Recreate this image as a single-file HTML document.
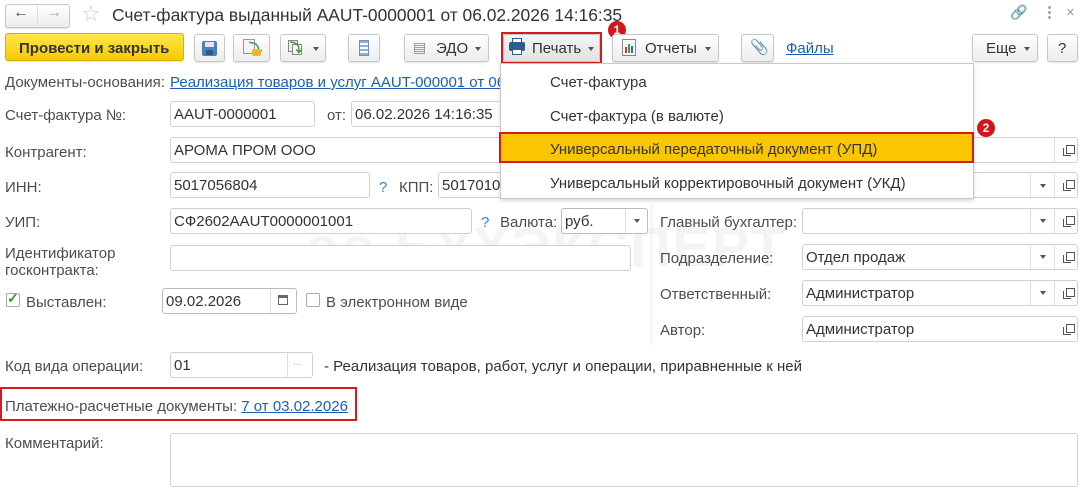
<!DOCTYPE html>
<html><head><meta charset="utf-8">
<style>
*{box-sizing:border-box;margin:0;padding:0}
body{width:1083px;height:492px;background:#fff;position:relative;overflow:hidden;font-family:"Liberation Sans",Arial,sans-serif;font-size:15px;color:#333}
.a{position:absolute;white-space:nowrap}
.btn{position:absolute;height:28px;border:1px solid #c8c8c8;border-radius:3px;background:linear-gradient(#fff,#ececec);box-shadow:0 1px 1px rgba(0,0,0,.12)}
.inp{position:absolute;height:26px;border:1px solid #d0d0d0;border-radius:3px;background:#fff;padding:4px 3px 2px;font-size:15px;color:#333;white-space:nowrap;overflow:hidden}
.lbl{position:absolute;color:#4d4d4d;white-space:nowrap;padding-top:1px}
.m{position:absolute;white-space:nowrap;color:#333;padding-top:1px}
.lnk{color:#1a5fb4;text-decoration:underline}
.dd{position:absolute;width:1px;background:#ddd}
.tri{position:absolute;width:0;height:0;border-left:3px solid transparent;border-right:3px solid transparent;border-top:4px solid #555}
.cp{position:absolute;width:9px;height:9px;border:1.3px solid #555;background:#fff}
.cp:before{content:"";position:absolute;left:-4px;top:2px;width:7px;height:7px;border-left:1.3px solid #555;border-bottom:1.3px solid #555}
.q{position:absolute;color:#2a85d6;padding-top:1px}
.badge{position:absolute;width:18px;height:18px;border-radius:50%;background:#d0181c;color:#fff;font-weight:bold;font-size:12px;text-align:center;line-height:18px}
</style></head><body>

<!-- title bar -->
<div class="btn" style="left:5px;top:4px;width:65px;height:24px"></div>
<div class="a" style="left:37px;top:6px;width:1px;height:20px;background:#ddd"></div>
<div class="a" style="left:13px;top:4px;font-size:16px;color:#444">&#8592;</div>
<div class="a" style="left:46px;top:4px;font-size:16px;color:#aaa">&#8594;</div>
<div class="a" style="left:81px;top:1px;font-size:22px;color:#ccc">&#9734;</div>
<div class="a" style="left:112px;top:5px;font-size:17.4px;color:#333">Счет-фактура выданный AAUT-0000001 от 06.02.2026 14:16:35</div>
<div class="a" style="left:1010px;top:4px;font-size:14px;color:#bbb">&#128279;</div>
<div class="a" style="left:1042px;top:3px;font-size:15px;color:#888;font-weight:bold">&#8942;</div>
<div class="a" style="left:1066px;top:4px;font-size:15px;color:#999">×</div>

<!-- toolbar -->
<div class="btn" style="left:5px;top:33px;width:179px;background:linear-gradient(#ffe54a,#f5cc00);border-color:#d6b200"></div>
<div class="a" style="left:19px;top:40px;font-weight:bold;color:#333">Провести и закрыть</div>
<div class="btn" style="left:194px;top:34px;width:31px"></div>
<div class="a" style="left:202px;top:41px;width:15px;height:15px;background:#4f7fb8;border-radius:2px"><div style="position:absolute;left:3px;top:1px;width:9px;height:5px;background:#dfe8f3"></div><div style="position:absolute;left:4px;top:9px;width:7px;height:5px;background:#2e5a8f"></div></div>
<div class="btn" style="left:233px;top:34px;width:37px"></div>
<div class="a" style="left:243px;top:39px;width:12px;height:15px;background:#f4f4f4;border:1px solid #999"></div>
<div class="a" style="left:249px;top:38px;font-size:13px;color:#2c9b33;font-weight:bold">&#10549;</div>
<div class="a" style="left:252px;top:49px;width:9px;height:7px;background:#e8b830;border-radius:2px"></div>
<div class="btn" style="left:280px;top:34px;width:46px"></div>
<div class="a" style="left:288px;top:40px;width:10px;height:12px;border:1px solid #888;background:#eee"></div>
<div class="a" style="left:292px;top:44px;width:10px;height:11px;border:1px solid #888;background:#f8f8f8"></div>
<div class="a" style="left:290px;top:39px;font-size:12px;color:#2c9b33;font-weight:bold">&#10549;</div>
<div class="tri" style="left:313px;top:47px"></div>
<div class="btn" style="left:348px;top:34px;width:32px"></div>
<div class="a" style="left:359px;top:40px;width:10px;height:16px;border:1px solid #6b8fc0;background:repeating-linear-gradient(#8fb0dc 0 2px,#fff 2px 4px)"></div>
<div class="btn" style="left:404px;top:34px;width:85px"></div>
<div class="a" style="left:413px;top:39px;font-size:14px;color:#888">&#9636;</div>
<div class="a" style="left:436px;top:40px;color:#333">ЭДО</div>
<div class="tri" style="left:475px;top:47px"></div>

<div class="btn" style="left:503px;top:34px;width:97px;background:linear-gradient(#f4f4f4,#e2e2e2)"></div>
<div class="a" style="left:501px;top:32px;width:101px;height:32px;border:2px solid #d8191e"></div>
<div class="a" style="left:509px;top:42px;width:16px;height:9px;background:#2a5d94;border-radius:2px"></div>
<div class="a" style="left:512px;top:38px;width:10px;height:5px;border:1px solid #2a5d94;background:#fff"></div>
<div class="a" style="left:512px;top:49px;width:10px;height:6px;border:1px solid #2a5d94;background:#fff"></div>
<div class="a" style="left:532px;top:40px;color:#333">Печать</div>
<div class="tri" style="left:588px;top:47px"></div>
<div class="badge" style="left:608px;top:21px">1</div>

<div class="btn" style="left:612px;top:34px;width:107px"></div>
<div class="a" style="left:622px;top:39px;width:14px;height:17px;border:1px solid #888;background:#f6f6f6"></div>
<div class="a" style="left:625px;top:47px;width:2px;height:6px;background:#d33"></div>
<div class="a" style="left:628px;top:44px;width:2px;height:9px;background:#3a3"></div>
<div class="a" style="left:631px;top:46px;width:2px;height:7px;background:#36c"></div>
<div class="a" style="left:645px;top:40px;color:#333">Отчеты</div>
<div class="tri" style="left:705px;top:47px"></div>
<div class="btn" style="left:741px;top:34px;width:33px"></div>
<div class="a" style="left:750px;top:38px;font-size:15px;color:#777">&#128206;</div>
<div class="a lnk" style="left:786px;top:40px">Файлы</div>
<div class="btn" style="left:972px;top:34px;width:66px"></div>
<div class="a" style="left:986px;top:40px">Еще</div>
<div class="tri" style="left:1024px;top:47px"></div>
<div class="btn" style="left:1047px;top:34px;width:31px"></div>
<div class="a" style="left:1058px;top:40px">?</div>

<!-- watermark -->
<div class="a" style="left:305px;top:214px;font-size:56px;font-weight:bold;color:#f4f4f4;letter-spacing:2px">оо БУХЭКСПЕРТ</div>
<div class="a" style="left:651px;top:205px;height:140px;border-left:1px dotted #ddd"></div>

<!-- form -->
<div class="lbl" style="left:5px;top:73px">Документы-основания:</div>
<div class="a lnk" style="left:170px;top:74px;width:330px;overflow:hidden">Реализация товаров и услуг AAUT-000001 от 06.02.2026</div>

<div class="lbl" style="left:5px;top:106px">Счет-фактура №:</div>
<div class="inp" style="left:170px;top:101px;width:145px">AAUT-0000001</div>
<div class="lbl" style="left:327px;top:106px">от:</div>
<div class="inp" style="left:351px;top:101px;width:160px">06.02.2026 14:16:35</div>

<div class="lbl" style="left:5px;top:143px">Контрагент:</div>
<div class="inp" style="left:170px;top:137px;width:908px">АРОМА ПРОМ ООО</div>
<div class="dd" style="left:1054px;top:138px;height:24px"></div>
<div class="cp" style="left:1066px;top:145px"></div>

<div class="lbl" style="left:5px;top:178px">ИНН:</div>
<div class="inp" style="left:170px;top:172px;width:200px">5017056804</div>
<div class="q" style="left:379px;top:178px">?</div>
<div class="lbl" style="left:399px;top:178px">КПП:</div>
<div class="inp" style="left:438px;top:172px;width:640px">5017010</div>
<div class="dd" style="left:1030px;top:173px;height:24px"></div>
<div class="tri" style="left:1040px;top:184px"></div>
<div class="dd" style="left:1054px;top:173px;height:24px"></div>
<div class="cp" style="left:1066px;top:180px"></div>

<div class="lbl" style="left:5px;top:213px">УИП:</div>
<div class="inp" style="left:170px;top:208px;width:302px">СФ2602AAUT0000001001</div>
<div class="q" style="left:481px;top:213px">?</div>
<div class="lbl" style="left:500px;top:213px">Валюта:</div>
<div class="inp" style="left:561px;top:208px;width:87px;border-color:#bbb">руб.</div>
<div class="dd" style="left:625px;top:209px;height:24px"></div>
<div class="tri" style="left:634px;top:219px"></div>

<div class="lbl" style="left:660px;top:213px">Главный бухгалтер:</div>
<div class="inp" style="left:802px;top:208px;width:276px"></div>
<div class="dd" style="left:1030px;top:209px;height:24px"></div><div class="tri" style="left:1040px;top:219px"></div>
<div class="dd" style="left:1054px;top:209px;height:24px"></div><div class="cp" style="left:1066px;top:216px"></div>

<div class="lbl" style="left:5px;top:244px;line-height:17px;white-space:normal">Идентификатор<br>госконтракта:</div>
<div class="inp" style="left:170px;top:245px;width:461px"></div>

<div class="lbl" style="left:660px;top:249px">Подразделение:</div>
<div class="inp" style="left:802px;top:244px;width:276px">Отдел продаж</div>
<div class="dd" style="left:1030px;top:245px;height:24px"></div><div class="tri" style="left:1040px;top:255px"></div>
<div class="dd" style="left:1054px;top:245px;height:24px"></div><div class="cp" style="left:1066px;top:252px"></div>

<div class="a" style="left:6px;top:293px;width:14px;height:14px;border:1px solid #aaa;border-radius:2px"></div>
<div class="a" style="left:7px;top:290px;font-size:14px;color:#2a9a2a;font-weight:bold">&#10003;</div>
<div class="lbl" style="left:26px;top:293px">Выставлен:</div>
<div class="inp" style="left:162px;top:288px;width:135px;border-color:#bbb">09.02.2026</div>
<div class="dd" style="left:270px;top:289px;height:24px"></div>
<div class="a" style="left:278px;top:295px;width:10px;height:10px;border:1px solid #666;border-top:3px solid #666"></div>
<div class="a" style="left:306px;top:293px;width:14px;height:14px;border:1px solid #aaa;border-radius:2px"></div>
<div class="lbl" style="left:326px;top:293px">В электронном виде</div>

<div class="lbl" style="left:660px;top:285px">Ответственный:</div>
<div class="inp" style="left:802px;top:280px;width:276px">Администратор</div>
<div class="dd" style="left:1030px;top:281px;height:24px"></div><div class="tri" style="left:1040px;top:291px"></div>
<div class="dd" style="left:1054px;top:281px;height:24px"></div><div class="cp" style="left:1066px;top:288px"></div>

<div class="lbl" style="left:660px;top:321px">Автор:</div>
<div class="inp" style="left:802px;top:316px;width:276px">Администратор</div>
<div class="cp" style="left:1066px;top:324px"></div>

<div class="lbl" style="left:5px;top:357px">Код вида операции:</div>
<div class="inp" style="left:170px;top:352px;width:143px">01</div>
<div class="dd" style="left:287px;top:353px;height:24px"></div>
<div class="a" style="left:293px;top:357px;font-size:10px;color:#aaa">...</div>
<div class="lbl" style="left:324px;top:357px;color:#333">- Реализация товаров, работ, услуг и операции, приравненные к ней</div>

<div class="a" style="left:0px;top:387px;width:357px;height:34px;border:2px solid #d8191e"></div>
<div class="lbl" style="left:5px;top:397px">Платежно-расчетные документы: <span class="lnk">7 от 03.02.2026</span></div>

<div class="lbl" style="left:5px;top:434px">Комментарий:</div>
<div class="inp" style="left:170px;top:433px;width:908px;height:54px"></div>

<!-- dropdown menu -->
<div class="a" style="left:500px;top:63px;width:474px;height:136px;background:#fff;border:1px solid #c9c9c9;box-shadow:0 2px 4px rgba(0,0,0,.15)"></div>
<div class="m" style="left:550px;top:73px">Счет-фактура</div>
<div class="m" style="left:550px;top:107px">Счет-фактура (в валюте)</div>
<div class="a" style="left:499px;top:132px;width:475px;height:31px;background:#fbc600;border:2px solid #d8191e"></div>
<div class="m" style="left:550px;top:140px">Универсальный передаточный документ (УПД)</div>
<div class="m" style="left:550px;top:174px">Универсальный корректировочный документ (УКД)</div>
<div class="badge" style="left:977px;top:119px">2</div>
</body></html>
